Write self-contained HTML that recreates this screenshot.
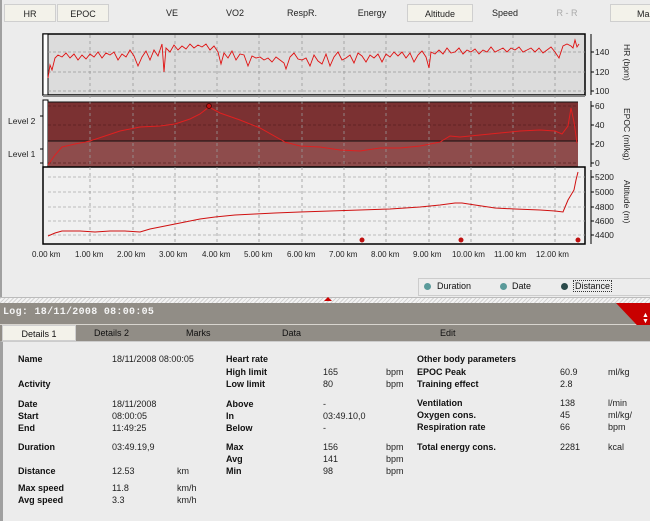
<!DOCTYPE html>
<html><head><style>
body{margin:0;width:650px;height:521px;background:#ececec;font-family:"Liberation Sans",sans-serif;position:relative;overflow:hidden;font-size:9px;color:#111}
.t{position:absolute;top:4px;height:18px;line-height:18px;text-align:center;font-size:9px;color:#222}
.b{background:#f3f2ea;border:1px solid #cfcfcf;box-sizing:border-box}
.a{position:absolute}
.lb{position:absolute;font-weight:bold;font-size:9px}
.v{position:absolute;font-size:9px;color:#222}
</style></head><body>
<div style="position:absolute;left:0;top:0;width:650px;height:297px;border-left:2px solid #a0a0a0;box-sizing:border-box"></div>
<div class="t b" style="left:4px;width:52px">HR</div>
<div class="t b" style="left:57px;width:52px">EPOC</div>
<div class="t" style="left:150px;width:44px">VE</div>
<div class="t" style="left:210px;width:50px">VO2</div>
<div class="t" style="left:274px;width:56px">RespR.</div>
<div class="t" style="left:346px;width:52px">Energy</div>
<div class="t b" style="left:407px;width:66px">Altitude</div>
<div class="t" style="left:480px;width:50px">Speed</div>
<div class="t" style="left:540px;width:54px;color:#aaa">R - R</div>
<div class="t b" style="left:610px;width:60px;text-align:left;padding-left:26px">Mar</div>

<svg class="a" style="left:0;top:0" width="650" height="300">
<!-- HR panel -->
<rect x="43" y="34" width="542" height="61" fill="#dcdcdc" stroke="#000" stroke-width="1.5"/>
<rect x="43" y="34" width="5" height="61" fill="#fff" stroke="#000"/>
<g stroke="#999" stroke-dasharray="3,2" stroke-width="0.8">
<line x1="48" y1="52" x2="585" y2="52"/><line x1="48" y1="72" x2="585" y2="72"/><line x1="48" y1="91" x2="585" y2="91"/>
</g>
<line x1="43" y1="96" x2="585" y2="96" stroke="#888" stroke-width="2"/>
<!-- EPOC -->
<rect x="43" y="100" width="5" height="70" fill="#fff" stroke="#000"/>
<rect x="48" y="102" width="530" height="39" fill="#7b3132"/>
<rect x="48" y="141" width="530" height="26" fill="#8e4c4c"/>
<line x1="48" y1="102" x2="578" y2="102" stroke="#111"/>
<line x1="48" y1="141" x2="578" y2="141" stroke="#111"/>
<g stroke="#5a2020" stroke-dasharray="3,2" stroke-width="0.8">
<line x1="48" y1="106" x2="578" y2="106"/><line x1="48" y1="125" x2="578" y2="125"/><line x1="48" y1="163" x2="578" y2="163"/>
</g>
<!-- altitude -->
<rect x="43" y="167" width="542" height="77" fill="#f0f0f0" stroke="#000" stroke-width="1.5"/>
<rect x="48" y="102" width="530" height="65" fill="none"/>
<g stroke="#aaa" stroke-dasharray="3,2" stroke-width="0.8">
<line x1="48" y1="177" x2="585" y2="177"/><line x1="48" y1="192" x2="585" y2="192"/><line x1="48" y1="207" x2="585" y2="207"/><line x1="48" y1="221" x2="585" y2="221"/><line x1="48" y1="235" x2="585" y2="235"/>
</g>
<g stroke="#999" stroke-dasharray="3,3" stroke-width="0.8">
<line x1="90" y1="35" x2="90" y2="244"/><line x1="133" y1="35" x2="133" y2="244"/><line x1="175" y1="35" x2="175" y2="244"/><line x1="217" y1="35" x2="217" y2="244"/><line x1="259" y1="35" x2="259" y2="244"/><line x1="302" y1="35" x2="302" y2="244"/><line x1="344" y1="35" x2="344" y2="244"/><line x1="386" y1="35" x2="386" y2="244"/><line x1="429" y1="35" x2="429" y2="244"/><line x1="471" y1="35" x2="471" y2="244"/><line x1="513" y1="35" x2="513" y2="244"/><line x1="555" y1="35" x2="555" y2="244"/>
</g>
<!-- HR line -->
<polyline fill="none" stroke="#e01010" stroke-width="0.9" points="48,78 50,65 52,70 55,58 58,55 62,57 66,53 70,58 74,54 78,60 82,55 86,59 90,54 94,57 98,52 102,58 106,53 110,55 114,52 118,60 122,54 126,57 130,50 134,56 138,66 142,57 146,51 150,60 154,50 158,56 162,44 164,72 166,48 170,52 174,45 178,50 182,46 186,49 190,44 194,48 198,45 202,47 206,44 210,50 214,46 218,52 221,64 224,53 228,58 232,51 236,60 240,54 244,55 248,66 252,56 256,58 260,57 264,60 268,58 272,62 276,57 280,60 284,63 286,69 290,57 294,53 298,59 302,60 306,58 310,66 314,55 318,61 322,64 326,54 330,66 334,57 338,52 342,60 346,58 350,55 354,63 358,53 362,56 366,62 370,55 374,58 378,54 382,62 386,54 390,57 394,52 398,56 402,52 406,58 410,53 414,62 418,55 422,51 426,57 429,68 431,52 435,54 439,50 443,54 447,48 451,53 455,52 459,48 463,54 467,50 471,52 475,49 479,54 483,50 487,52 491,47 495,52 499,50 503,48 507,52 511,48 515,50 519,47 523,52 527,50 531,48 535,52 539,48 543,53 547,50 551,47 555,52 559,58 563,46 567,44 571,46 573,48 575,40 577,47 579,44"/>
<!-- EPOC line -->
<polyline fill="none" stroke="#e02020" stroke-width="1" points="48,165 55,155 62,147 75,144 90,141 105,136 120,131 140,127 160,126 175,124 190,119 200,114 209,107 220,113 240,120 260,128 285,142 300,146 320,147 340,150 360,151 380,148 400,148 420,146 440,142 450,136 460,137 480,135 500,133 520,131 540,130 555,131 562,134 568,126 571,108 574,122 577,143"/>
<circle cx="209" cy="106" r="2.5" fill="#c01010" stroke="#400" stroke-width="0.8"/>
<!-- altitude line -->
<polyline fill="none" stroke="#d01010" stroke-width="1" points="48,236 55,233 62,231 80,231 95,232 110,231 125,231 140,232 150,229 165,226 180,223 200,219 215,217 235,215 255,214 275,213 300,212 330,211 360,210 390,209 420,207 440,205 455,203 462,203 475,205 495,208 515,209 540,210 555,211 563,212 568,200 574,190 576,180 578,172"/>
<circle cx="362" cy="240" r="2.5" fill="#c01010"/><circle cx="461" cy="240" r="2.5" fill="#c01010"/><circle cx="578" cy="240" r="2.5" fill="#c01010"/>
<!-- right axes -->
<g stroke="#000"><line x1="591" y1="34" x2="591" y2="95"/><line x1="591" y1="101" x2="591" y2="167"/><line x1="591" y1="170" x2="591" y2="244"/>
<line x1="591" y1="52" x2="594" y2="52"/><line x1="591" y1="72" x2="594" y2="72"/><line x1="591" y1="91" x2="594" y2="91"/>
<line x1="591" y1="106" x2="594" y2="106"/><line x1="591" y1="125" x2="594" y2="125"/><line x1="591" y1="144" x2="594" y2="144"/><line x1="591" y1="163" x2="594" y2="163"/>
<line x1="591" y1="177" x2="594" y2="177"/><line x1="591" y1="192" x2="594" y2="192"/><line x1="591" y1="207" x2="594" y2="207"/><line x1="591" y1="221" x2="594" y2="221"/><line x1="591" y1="235" x2="594" y2="235"/>
<line x1="43" y1="116" x2="40" y2="116"/><line x1="43" y1="149" x2="40" y2="149"/><line x1="43" y1="163" x2="40" y2="163"/></g>
<g font-family="Liberation Sans" font-size="8.5" fill="#222">
<text x="595" y="55">140</text><text x="595" y="75">120</text><text x="595" y="94">100</text>
<text x="595" y="109">60</text><text x="595" y="128">40</text><text x="595" y="147">20</text><text x="595" y="166">0</text>
<text x="595" y="180">5200</text><text x="595" y="195">5000</text><text x="595" y="210">4800</text><text x="595" y="224">4600</text><text x="595" y="238">4400</text>
<text x="8" y="124">Level 2</text><text x="8" y="157">Level 1</text>
<text transform="translate(624,44) rotate(90)">HR (bpm)</text>
<text transform="translate(624,108) rotate(90)">EPOC (ml/kg)</text>
<text transform="translate(624,180) rotate(90)">Altitude (m)</text>
<g font-size="8">
<text x="32" y="257">0.00 km</text><text x="75" y="257">1.00 km</text><text x="117" y="257">2.00 km</text><text x="159" y="257">3.00 km</text><text x="202" y="257">4.00 km</text><text x="244" y="257">5.00 km</text><text x="287" y="257">6.00 km</text><text x="329" y="257">7.00 km</text><text x="371" y="257">8.00 km</text><text x="413" y="257">9.00 km</text><text x="452" y="257">10.00 km</text><text x="494" y="257">11.00 km</text><text x="536" y="257">12.00 km</text>
</g></g>
</svg>

<div class="a" style="left:418px;top:278px;width:232px;height:18px;border:1px solid #ccc;border-right:none;box-sizing:border-box;background:#ececec"></div>
<div class="a" style="left:424px;top:283px;width:7px;height:7px;border-radius:50%;background:#5a9a9a"></div>
<div class="a" style="left:437px;top:281px;font-size:9px">Duration</div>
<div class="a" style="left:500px;top:283px;width:7px;height:7px;border-radius:50%;background:#5a9a9a"></div>
<div class="a" style="left:512px;top:281px;font-size:9px">Date</div>
<div class="a" style="left:561px;top:283px;width:7px;height:7px;border-radius:50%;background:#2a4a4a"></div>
<div class="a" style="left:573px;top:280px;font-size:9px;border:1px dotted #333;padding:0 1px">Distance</div>

<div class="a" style="left:0;top:297px;width:650px;height:6px;background:repeating-linear-gradient(135deg,#d4d4d4 0 1px,#f4f4f4 1px 3px);border-top:1px solid #bbb"></div>
<div class="a" style="left:324px;top:297px;width:0;height:0;border-left:4px solid transparent;border-right:4px solid transparent;border-bottom:4px solid #c00"></div>
<div class="a" style="left:0;top:303px;width:650px;height:21px;background:#918d86;border-bottom:1px solid #d8d5cf"></div>
<div class="a" style="left:3px;top:307px;color:#f4f4f4;font-weight:bold;font-size:10px;font-family:'Liberation Mono',monospace;letter-spacing:0.3px">Log: 18/11/2008 08:00:05</div>
<svg class="a" style="left:616px;top:303px" width="34" height="36"><polygon points="0,0 34,0 34,36" fill="#c80000"/><text x="26" y="14" fill="#fff" font-size="7">▲</text><text x="26" y="20" fill="#fff" font-size="7">▼</text></svg>
<div class="a" style="left:0;top:325px;width:650px;height:16px;background:#918d86"></div>
<div class="a b" style="left:2px;top:325px;width:74px;height:16px;line-height:16px;text-align:center;font-size:9px">Details 1</div>
<div class="a" style="left:94px;top:328px;font-size:9px">Details 2</div>
<div class="a" style="left:186px;top:328px;font-size:9px">Marks</div>
<div class="a" style="left:282px;top:328px;font-size:9px">Data</div>
<div class="a" style="left:440px;top:328px;font-size:9px">Edit</div>
<div class="a" style="left:0;top:341px;width:650px;height:180px;background:#ececec;border-left:3px solid #a0a0a0;border-top:1px solid #ccc;box-sizing:border-box"></div>

<div class="lb" style="left:18px;top:354px">Name</div><div class="v" style="left:112px;top:354px">18/11/2008 08:00:05</div>
<div class="lb" style="left:18px;top:379px">Activity</div>
<div class="lb" style="left:18px;top:399px">Date</div><div class="v" style="left:112px;top:399px">18/11/2008</div>
<div class="lb" style="left:18px;top:411px">Start</div><div class="v" style="left:112px;top:411px">08:00:05</div>
<div class="lb" style="left:18px;top:423px">End</div><div class="v" style="left:112px;top:423px">11:49:25</div>
<div class="lb" style="left:18px;top:442px">Duration</div><div class="v" style="left:112px;top:442px">03:49.19,9</div>
<div class="lb" style="left:18px;top:466px">Distance</div><div class="v" style="left:112px;top:466px">12.53</div><div class="v" style="left:177px;top:466px">km</div>
<div class="lb" style="left:18px;top:483px">Max speed</div><div class="v" style="left:112px;top:483px">11.8</div><div class="v" style="left:177px;top:483px">km/h</div>
<div class="lb" style="left:18px;top:495px">Avg speed</div><div class="v" style="left:112px;top:495px">3.3</div><div class="v" style="left:177px;top:495px">km/h</div>

<div class="lb" style="left:226px;top:354px">Heart rate</div>
<div class="lb" style="left:226px;top:367px">High limit</div><div class="v" style="left:323px;top:367px">165</div><div class="v" style="left:386px;top:367px">bpm</div>
<div class="lb" style="left:226px;top:379px">Low limit</div><div class="v" style="left:323px;top:379px">80</div><div class="v" style="left:386px;top:379px">bpm</div>
<div class="lb" style="left:226px;top:399px">Above</div><div class="v" style="left:323px;top:399px">-</div>
<div class="lb" style="left:226px;top:411px">In</div><div class="v" style="left:323px;top:411px">03:49.10,0</div>
<div class="lb" style="left:226px;top:423px">Below</div><div class="v" style="left:323px;top:423px">-</div>
<div class="lb" style="left:226px;top:442px">Max</div><div class="v" style="left:323px;top:442px">156</div><div class="v" style="left:386px;top:442px">bpm</div>
<div class="lb" style="left:226px;top:454px">Avg</div><div class="v" style="left:323px;top:454px">141</div><div class="v" style="left:386px;top:454px">bpm</div>
<div class="lb" style="left:226px;top:466px">Min</div><div class="v" style="left:323px;top:466px">98</div><div class="v" style="left:386px;top:466px">bpm</div>

<div class="lb" style="left:417px;top:354px">Other body parameters</div>
<div class="lb" style="left:417px;top:367px">EPOC Peak</div><div class="v" style="left:560px;top:367px">60.9</div><div class="v" style="left:608px;top:367px">ml/kg</div>
<div class="lb" style="left:417px;top:379px">Training effect</div><div class="v" style="left:560px;top:379px">2.8</div>
<div class="lb" style="left:417px;top:398px">Ventilation</div><div class="v" style="left:560px;top:398px">138</div><div class="v" style="left:608px;top:398px">l/min</div>
<div class="lb" style="left:417px;top:410px">Oxygen cons.</div><div class="v" style="left:560px;top:410px">45</div><div class="v" style="left:608px;top:410px">ml/kg/</div>
<div class="lb" style="left:417px;top:422px">Respiration rate</div><div class="v" style="left:560px;top:422px">66</div><div class="v" style="left:608px;top:422px">bpm</div>
<div class="lb" style="left:417px;top:442px">Total energy cons.</div><div class="v" style="left:560px;top:442px">2281</div><div class="v" style="left:608px;top:442px">kcal</div>
</body></html>
